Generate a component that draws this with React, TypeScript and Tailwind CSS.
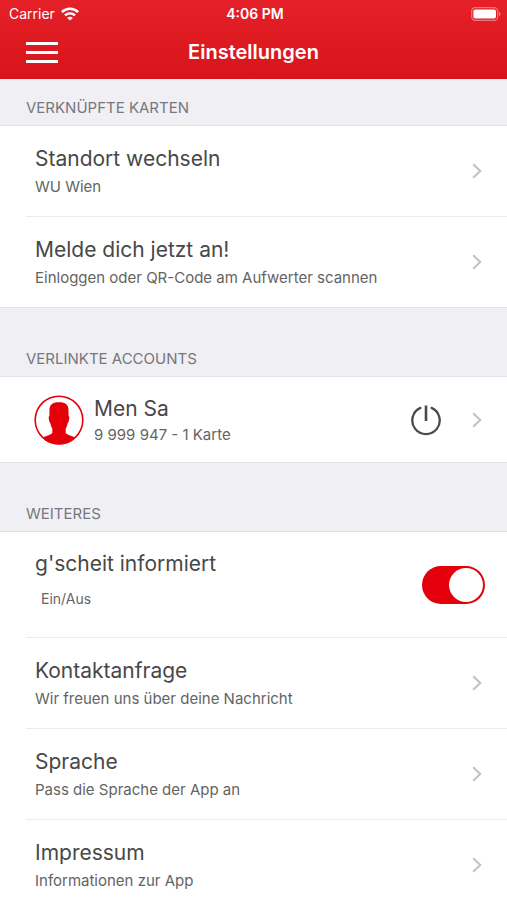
import {useState} from 'react'
import type {ReactNode} from 'react'
import clsx from 'clsx'

const WifiIcon = () => (
    <svg viewBox="0 0 18 14" className="h-[14px] w-[18px]" fill="none" stroke="currentColor" strokeWidth="2.6" aria-hidden="true">
        <path d="M.9 5C5.5.7 12.5.7 17.1 5" />
        <path d="M4 8.4c2.9-2.6 7.1-2.6 10 0" />
        <path d="M9 13.6 6.2 10.9c1.6-1.4 4-1.4 5.6 0z" fill="currentColor" stroke="none" />
    </svg>
)

const BatteryIcon = () => (
    <svg viewBox="0 0 30 14" className="h-[14px] w-[30px]" aria-hidden="true">
        <rect x=".7" y=".7" width="26" height="12.6" rx="3.6" fill="none" stroke="#fff" strokeOpacity=".4" strokeWidth="1.2" />
        <rect x="2.4" y="2.4" width="22.6" height="9.2" rx="2" fill="#fff" />
        <path d="M28 4.8c1.8.6 1.8 3.8 0 4.4z" fill="#fff" fillOpacity=".45" />
    </svg>
)

const ChevronIcon = () => (
    <svg viewBox="0 0 10 16" className="h-4 w-[10px] shrink-0" fill="none" stroke="#c4c4c6" strokeWidth="2.2" aria-hidden="true">
        <path d="M1.2 1.2 8.2 8l-7 6.8" />
    </svg>
)

const PowerIcon = () => (
    <svg viewBox="0 0 32 32" className="size-8" fill="none" stroke="#4a4a4a" strokeWidth="2.3" aria-hidden="true">
        <path d="M10.4 3.9a13.7 13.7 0 1 0 11.2 0" strokeLinecap="round" />
        <path d="M16 1.5v15.5" strokeWidth="2.6" />
    </svg>
)

const AvatarIcon = () => (
    <svg viewBox="0 0 50 50" className="size-[50px] shrink-0" aria-hidden="true">
        <circle cx="25" cy="25" r="23.8" fill="#fff" stroke="#e3000b" strokeWidth="1.6" />
        <path
            d="M25 7.3C18 7.3 15.800 10 15.500 14.500L15.400 21c-.9.5-.8 2-.5 3.500.3 1.800.7 3.200 1.600 3.900.4 2.300.9 3.800 1.800 5.100v4.200c-1.100 2-5.400 2.900-9.800 4.900C12.500 47 18.500 49.600 25 49.600S37.500 47 41.500 42.600c-4.400-2-8.700-2.900-9.800-4.900v-4.200c.9-1.300 1.400-2.800 1.800-5.100.9-.7 1.300-2.100 1.600-3.900.3-1.500.4-3-.5-3.500l-.1-6.500C34.200 10 32 7.300 25 7.300z"
            fill="#e3000b"
        />
    </svg>
)

const SectionTitle = ({children}: {children: ReactNode}) => (
    <h2 className="px-[26px] pb-[7px] text-[15px] leading-5 text-[#77777c]">{children}</h2>
)

const RowText = ({title, subtitle, className}: {title: string; subtitle: string; className?: string}) => (
    <span className={clsx('flex min-w-0 flex-1 flex-col', className)}>
        <span className="text-[21px] leading-7 text-[#484848]">{title}</span>
        <span className="text-[15px] leading-5 text-[#646464]">{subtitle}</span>
    </span>
)

const LinkRow = ({title, subtitle}: {title: string; subtitle: string}) => (
    <li className="group bg-white pl-[26px]">
        <a
            href="#"
            className="flex h-[91px] items-center border-t border-[#ececee] pr-[25px] pl-[9px] group-first:h-[90px] group-first:border-t-0"
        >
            <RowText title={title} subtitle={subtitle} className="gap-1 pb-px" />
            <ChevronIcon />
        </a>
    </li>
)

const App = () => {
    const [informed, setInformed] = useState(true)

    return (
        <div className="flex h-screen flex-col bg-[#efeff4] font-['Inter',sans-serif]">
            <header className="shrink-0 bg-linear-to-b from-[#e52028] to-[#d8141b] text-white">
                <div className="grid h-7 grid-cols-3 items-center pr-[6px] pl-[9px] text-sm">
                    <span className="flex items-center gap-[6px]">
                        Carrier
                        <WifiIcon />
                    </span>
                    <span className="text-center font-semibold">4:06 PM</span>
                    <span className="flex justify-end">
                        <BatteryIcon />
                    </span>
                </div>
                <div className="grid h-[51px] grid-cols-[32px_1fr_32px] items-center px-[26px] pb-[3px]">
                    <button type="button" aria-label="Menü" className="flex flex-col gap-[6px]">
                        <span className="h-[3px] w-8 bg-white" />
                        <span className="h-[3px] w-8 bg-white" />
                        <span className="h-[3px] w-8 bg-white" />
                    </button>
                    <h1 className="text-center text-xl font-semibold">Einstellungen</h1>
                </div>
            </header>

            <main className="flex-1 overflow-y-auto [scrollbar-width:none]">
                <section className="pt-[19px]">
                    <SectionTitle>VERKNÜPFTE KARTEN</SectionTitle>
                    <ul className="border-y border-[#e2e2e6]">
                        <LinkRow title="Standort wechseln" subtitle="WU Wien" />
                        <LinkRow title="Melde dich jetzt an!" subtitle="Einloggen oder QR-Code am Aufwerter scannen" />
                    </ul>
                </section>

                <section className="pt-[41px]">
                    <SectionTitle>VERLINKTE ACCOUNTS</SectionTitle>
                    <div className="flex h-[87px] items-center border-y border-[#e2e2e6] bg-white pr-[25px] pl-[34px]">
                        <a href="#" className="flex min-w-0 flex-1 items-center gap-[10px]">
                            <AvatarIcon />
                            <RowText title="Men Sa" subtitle="9 999 947 - 1 Karte" className="gap-[2px]" />
                        </a>
                        <button type="button" aria-label="Abmelden" className="mr-[30px]">
                            <PowerIcon />
                        </button>
                        <a href="#" aria-label="Account öffnen">
                            <ChevronIcon />
                        </a>
                    </div>
                </section>

                <section className="pt-[41px]">
                    <SectionTitle>WEITERES</SectionTitle>
                    <ul className="border-t border-[#e2e2e6]">
                        <li className="bg-white">
                            <label className="flex h-[105px] cursor-pointer items-center pr-[22px] pl-[35px]">
                                <span className="flex flex-1 flex-col gap-[11px] pb-[10px]">
                                    <span className="text-[21px] leading-7 text-[#484848]">g'scheit informiert</span>
                                    <span className="pl-[6px] text-sm leading-5 text-[#646464]">Ein/Aus</span>
                                </span>
                                <input
                                    type="checkbox"
                                    role="switch"
                                    checked={informed}
                                    onChange={(e) => setInformed(e.target.checked)}
                                    className="peer sr-only"
                                />
                                <span className="flex h-[38px] w-[63px] items-center rounded-full bg-[#d1d1d6] px-[2px] peer-checked:justify-end peer-checked:bg-[#e3000b]">
                                    <span className="size-[34px] rounded-full bg-white" />
                                </span>
                            </label>
                        </li>
                        <LinkRow title="Kontaktanfrage" subtitle="Wir freuen uns über deine Nachricht" />
                        <LinkRow title="Sprache" subtitle="Pass die Sprache der App an" />
                        <LinkRow title="Impressum" subtitle="Informationen zur App" />
                    </ul>
                </section>
            </main>
        </div>
    )
}

export default App
